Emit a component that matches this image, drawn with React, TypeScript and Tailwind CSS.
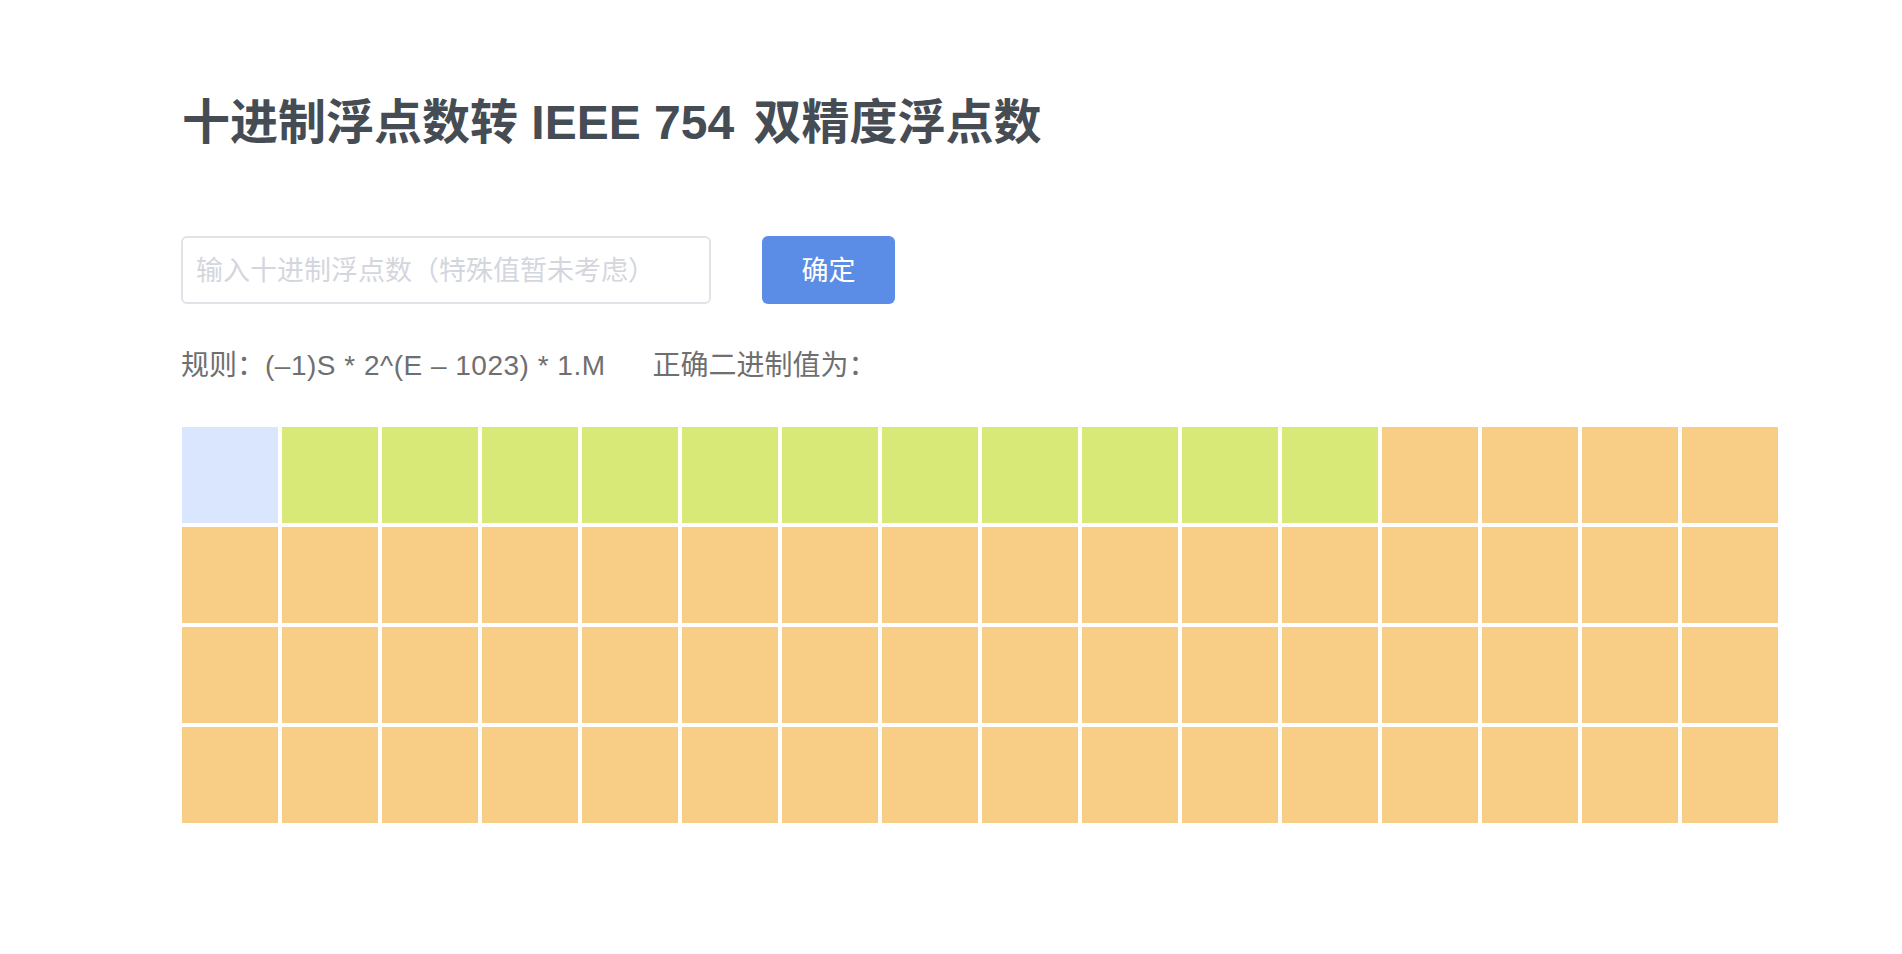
import { useState } from "react";

const FONT = `"Liberation Sans", "Noto Sans CJK SC", sans-serif`;

type BitKind = "sign" | "exponent" | "mantissa";

const bitKind = (i: number): BitKind => {
  if (i === 0) return "sign";
  if (i < 12) return "exponent";
  return "mantissa";
};

const kindClass: Record<BitKind, string> = {
  sign: "bg-[#d9e6fd]",
  exponent: "bg-[#d8e978]",
  mantissa: "bg-[#f8ce86]",
};

export default function App() {
  const [value, setValue] = useState("");
  const bits = Array.from({ length: 64 }, (_, i) => i);

  return (
    <div className="min-h-screen bg-white pl-[181px] pt-[99px]" style={{ fontFamily: FONT }}>
      <h1 className="text-[48px] leading-[48px] font-bold text-[#464c54] pl-px">
        十进制浮点数转 IEEE 754 <span className="ml-[6px]">双精度浮点数</span>
      </h1>

      <div className="mt-[89px] flex items-center">
        <input
          value={value}
          onChange={(e) => setValue(e.target.value)}
          placeholder="输入十进制浮点数（特殊值暂未考虑）"
          className="w-[530px] h-[68px] rounded-[6px] border-2 border-[#e2e3e9] px-[13px] pt-[2px] text-[27px] text-[#555] placeholder:text-[#d4d6dd] outline-none"
        />
        <button className="ml-[51px] w-[133px] h-[68px] rounded-[6px] bg-[#5b8de6] pt-[2px] text-white text-[27px]">
          确定
        </button>
      </div>

      <div className="mt-[48px] flex text-[28px] leading-[28px] text-[#6f6f6f]">
        <span>
          规则：<span className="tracking-[0.5px]">(–1)S * 2^(E – 1023) * 1.M</span>
        </span>
        <span className="ml-[47px]">正确二进制值为：</span>
      </div>

      <div className="mt-[47px] ml-px grid grid-cols-[repeat(16,96px)] gap-[4px] w-fit">
        {bits.map((i) => (
          <div key={i} className={`h-[96px] ${kindClass[bitKind(i)]}`} />
        ))}
      </div>
    </div>
  );
}
